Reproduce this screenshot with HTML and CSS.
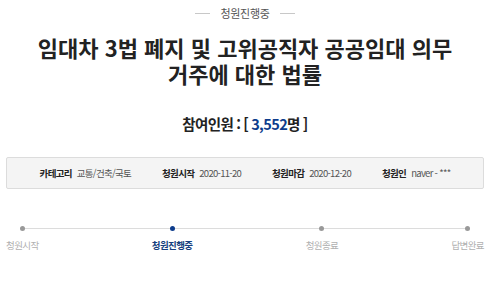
FILE: index.html
```html
<!DOCTYPE html>
<html lang="ko">
<head>
<meta charset="utf-8">
<link rel="stylesheet" href="styles.css">
</head>
<body>
<div class="wrap">
  <div class="status"><span class="dash"></span><span>청원진행중</span><span class="dash"></span></div>
  <h1 class="title"><span class="tline">임대차 3법 폐지 및 고위공직자 공공임대 의무</span><span class="tline">거주에 대한 법률</span></h1>
  <p class="count">참여인원 : [ <span class="num">3,552</span>명 ]</p>
  <div class="info">
    <div class="item"><span class="label">카테고리</span><span class="value">교통/건축/국토</span></div>
    <div class="item"><span class="label">청원시작</span><span class="value">2020-11-20</span></div>
    <div class="item"><span class="label">청원마감</span><span class="value">2020-12-20</span></div>
    <div class="item"><span class="label">청원인</span><span class="value">naver - ***</span></div>
  </div>
  <div class="steps">
    <div class="step"><span class="dot"></span><span class="step-label">청원시작</span></div>
    <div class="step active"><span class="dot"></span><span class="step-label">청원진행중</span></div>
    <div class="step"><span class="dot"></span><span class="step-label">청원종료</span></div>
    <div class="step"><span class="dot"></span><span class="step-label">답변완료</span></div>
  </div>
</div>
</body>
</html>
```
FILE: styles.css
```css
html, body {
  margin: 0;
  padding: 0;
  background: #fff;
}
body {
  font-family: "Noto Sans CJK KR", "Noto Sans", sans-serif;
  color: #222;
}
.wrap {
  margin-left: 6px;
  width: 478px;
}
.status {
  padding-top: 5px;
  display: flex;
  justify-content: center;
  align-items: center;
  gap: 10px;
  font-size: 11px;
  line-height: 16px;
  color: #555;
  letter-spacing: -0.3px;
}
.dash {
  width: 15px;
  height: 1px;
  background: #c8c8c8;
}
.title {
  margin: 15px 0 0;
  display: flex;
  flex-direction: column;
  align-items: center;
  gap: 4px;
  font-size: 22px;
  line-height: 22px;
  font-weight: 700;
  color: #222;
}
.tline {
  display: block;
  white-space: nowrap;
}
.count {
  margin: 30px 0 0;
  text-align: center;
  font-size: 14.5px;
  line-height: 20px;
  font-weight: 700;
  letter-spacing: -0.6px;
  word-spacing: -0.5px;
  color: #222;
}
.num {
  color: #0d3c8c;
}
.info {
  margin-top: 23px;
  height: 30px;
  border: 1px solid #dcdcdc;
  border-radius: 2px;
  background: #f4f4f4;
  display: flex;
  justify-content: center;
  align-items: center;
  gap: 31px;
  font-size: 9.5px;
  letter-spacing: -0.7px;
}
.item {
  display: flex;
  gap: 5px;
}
.label {
  font-weight: 700;
  color: #222;
}
.value {
  color: #555;
}
.steps {
  position: relative;
  margin-top: 37px;
  display: flex;
  justify-content: space-between;
}
.steps::before {
  content: "";
  position: absolute;
  left: 16px;
  right: 15px;
  top: 2px;
  height: 1px;
  background: #dcdcdc;
}
.step {
  position: relative;
  display: flex;
  flex-direction: column;
  align-items: center;
  gap: 7px;
}
.dot {
  width: 5px;
  height: 5px;
  border-radius: 50%;
  background: #999;
}
.step-label {
  font-size: 9.5px;
  line-height: 14px;
  color: #b0b0b0;
  letter-spacing: -0.6px;
}
.step.active .dot {
  background: #0d3c8c;
}
.step.active .step-label {
  color: #163f7e;
  font-weight: 700;
}
```
